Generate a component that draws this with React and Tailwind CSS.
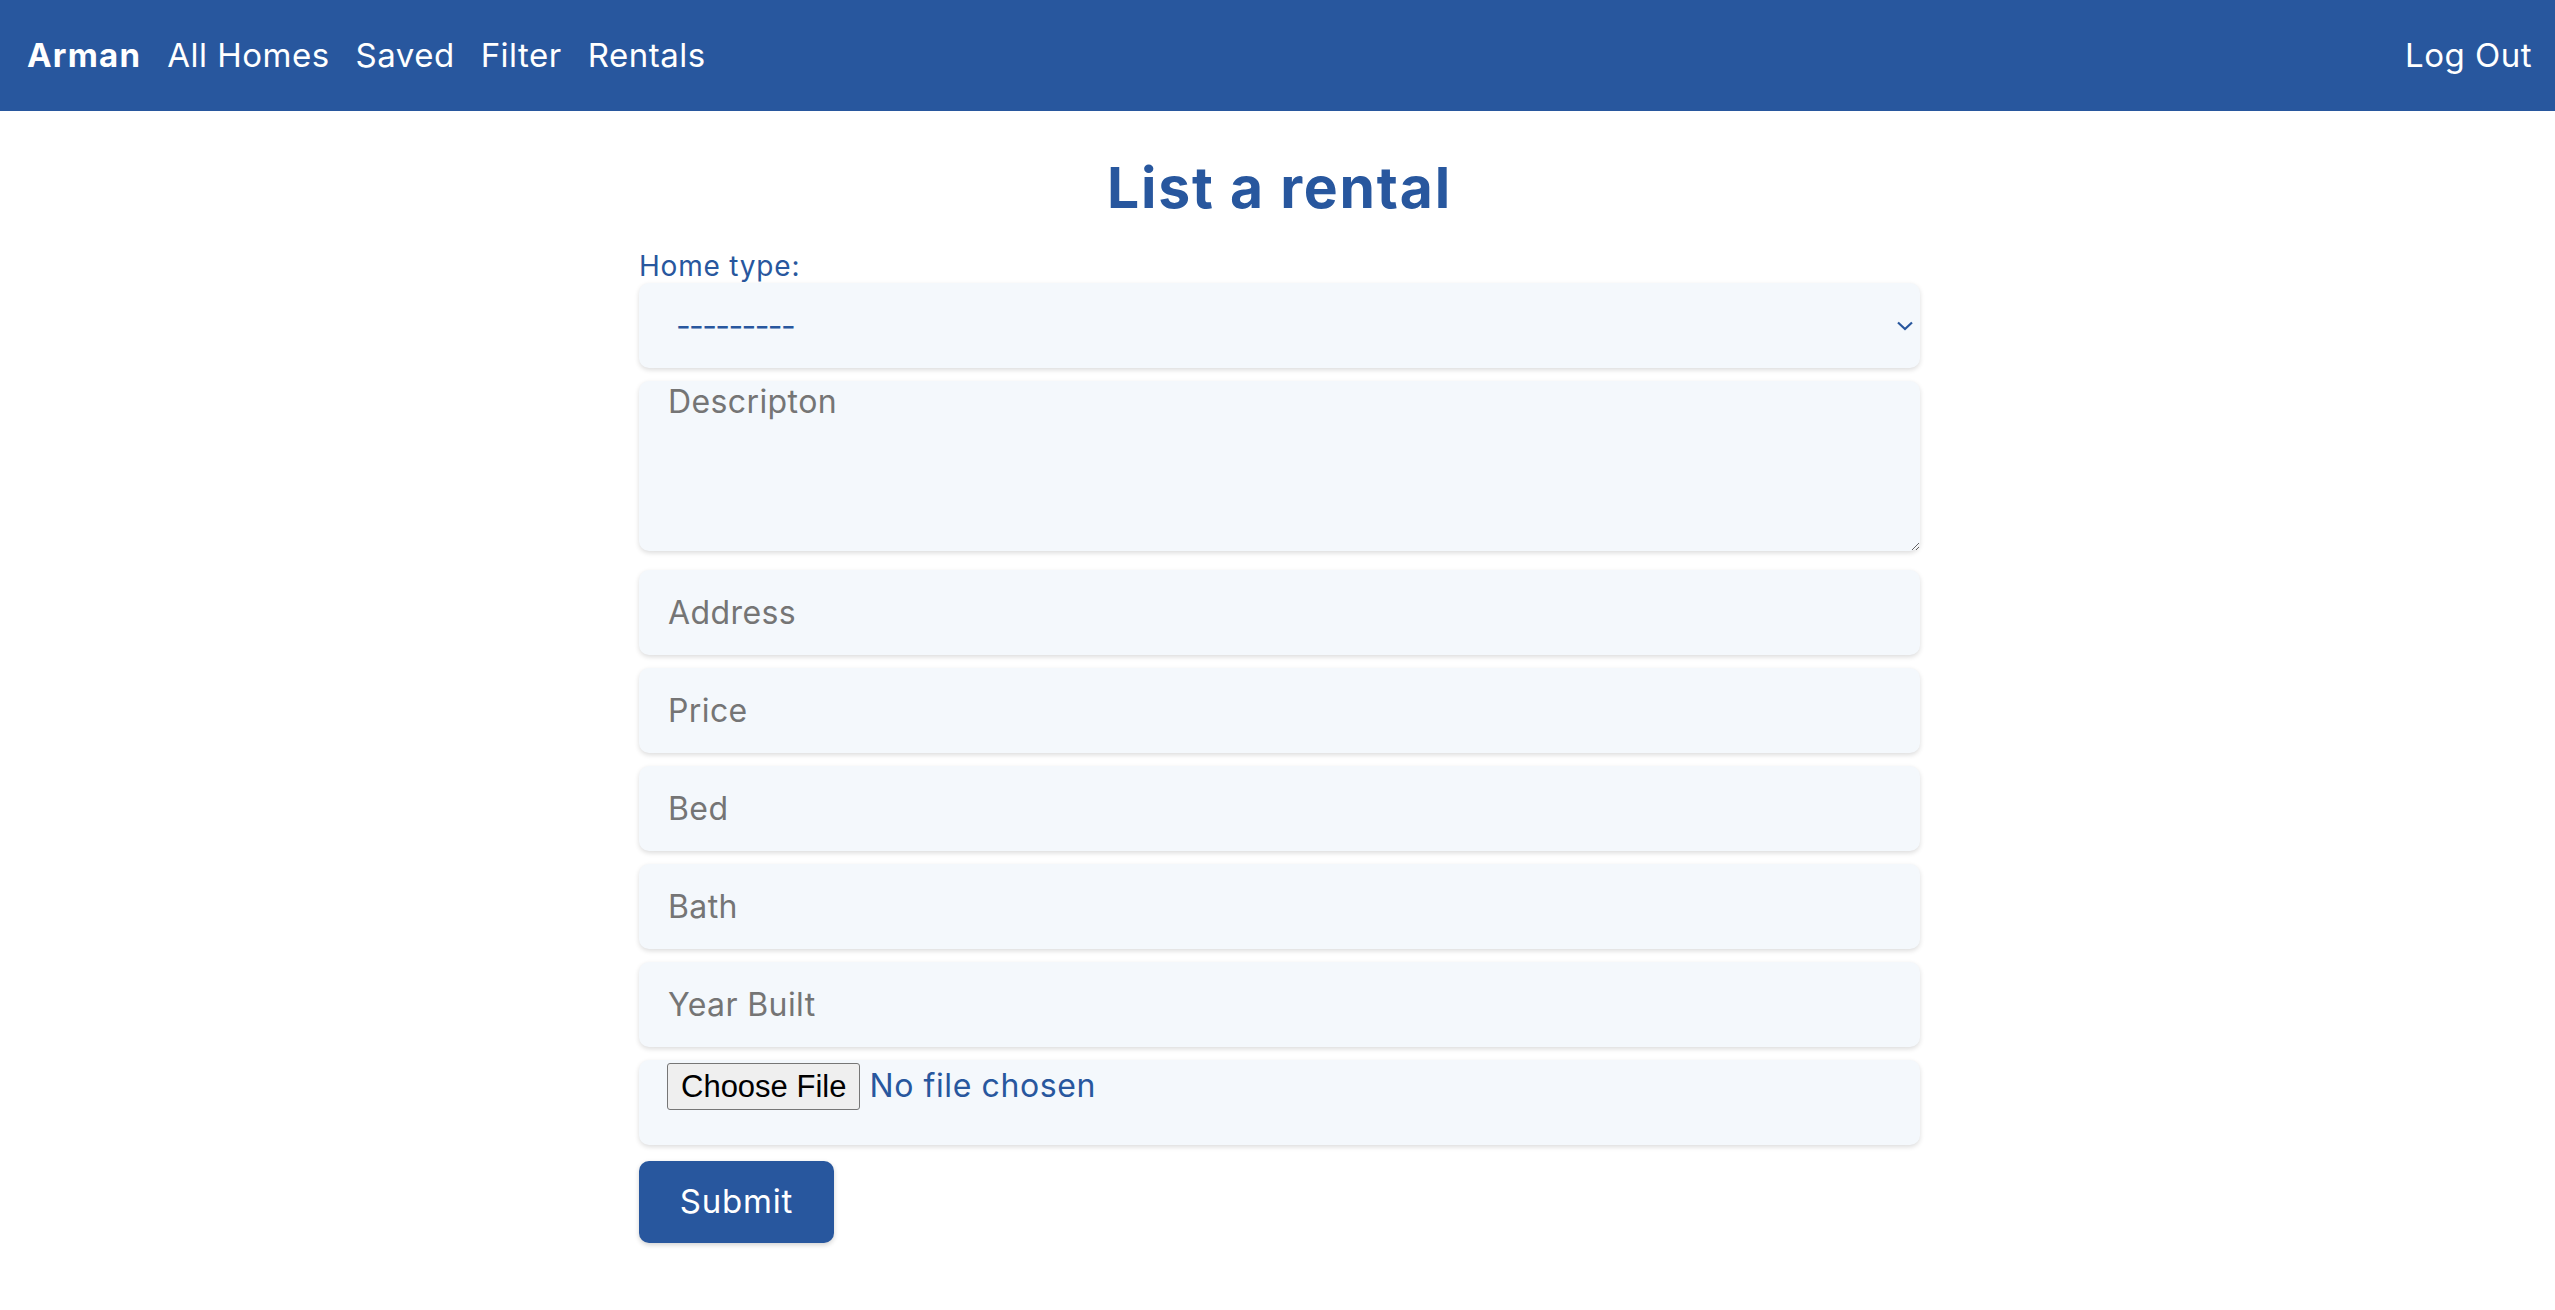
import { useState } from 'react'

const boxClass =
  'block w-full h-[85px] rounded-[10px] bg-[#f4f8fc] pr-[20px] text-[32px] text-[#28579e] placeholder:text-[#757575] outline-none shadow-[0_2px_5px_rgba(0,0,0,0.14)]'

const fieldClass = boxClass + ' pl-[29px] tracking-[0.4px] mb-[13px]'

export default function App() {
  const [homeType, setHomeType] = useState('')

  return (
    <div className="min-h-screen bg-white font-['Inter',sans-serif]">
      {/* Navbar */}
      <nav className="h-[111px] bg-[#28579e] flex items-center justify-between pl-[27px] pr-[23px] text-white text-[33px] tracking-[0.5px]">
        <div className="flex items-center gap-[26px]">
          <a href="#" className="font-bold tracking-[1.2px]">
            Arman
          </a>
          <a href="#">All Homes</a>
          <a href="#">Saved</a>
          <a href="#">Filter</a>
          <a href="#">Rentals</a>
        </div>
        <a href="#">Log Out</a>
      </nav>

      <main className="w-[1285px] mx-auto pl-[4px]">
        <h1 className="mt-[43px] text-center text-[57px] leading-[67px] font-bold tracking-[1.8px] text-[#28579e]">
          List a rental
        </h1>

        <form className="mt-[29px] flex flex-col" onSubmit={(e) => e.preventDefault()}>
          <label className="text-[28px] leading-[33px] tracking-[0.8px] text-[#28579e]">Home type:</label>

          <div className="relative mb-[13px]">
            <select
              value={homeType}
              onChange={(e) => setHomeType(e.target.value)}
              className={boxClass + ' appearance-none pl-[37px] tracking-[-1.6px]'}
            >
              <option value="">---------</option>
              <option value="house">House</option>
              <option value="apartment">Apartment</option>
              <option value="condo">Condo</option>
            </select>
            <svg
              className="absolute right-[7px] top-[38px] w-[16px] h-[10px] pointer-events-none"
              viewBox="0 0 16 10"
              fill="none"
              stroke="#28579e"
              strokeWidth="2.2"
            >
              <path d="M1 1.5 L8 8 L15 1.5" />
            </svg>
          </div>

          <textarea
            placeholder="Descripton"
            className="block w-full h-[170px] mb-[19px] rounded-[10px] bg-[#f4f8fc] pl-[29px] pt-0 text-[32px] leading-[1.3] tracking-[0.4px] text-[#28579e] placeholder:text-[#757575] outline-none shadow-[0_2px_5px_rgba(0,0,0,0.14)]"
          />

          <input type="text" placeholder="Address" className={fieldClass} />
          <input type="text" placeholder="Price" className={fieldClass} />
          <input type="text" placeholder="Bed" className={fieldClass} />
          <input type="text" placeholder="Bath" className={fieldClass} />
          <input type="text" placeholder="Year Built" className={fieldClass} />

          <div className="h-[85px] mb-[16px] rounded-[10px] bg-[#f4f8fc] pl-[28px] pt-[2px] shadow-[0_2px_5px_rgba(0,0,0,0.14)]">
            <input
              type="file"
              className="text-[32px] tracking-[0.6px] text-[#28579e] file:mr-[9px] file:h-[47px] file:px-[13px] file:tracking-normal file:font-['Liberation_Sans',sans-serif] file:text-[31px] file:text-black file:bg-[#efefef] file:border file:border-solid file:border-[#767676] file:rounded-[3px]"
            />
          </div>

          <div>
            <button
              type="submit"
              className="w-[195px] h-[82px] rounded-[10px] bg-[#28579e] text-white text-[33px] tracking-[0.8px] shadow-[0_2px_5px_rgba(0,0,0,0.18)]"
            >
              Submit
            </button>
          </div>
        </form>
      </main>
    </div>
  )
}
